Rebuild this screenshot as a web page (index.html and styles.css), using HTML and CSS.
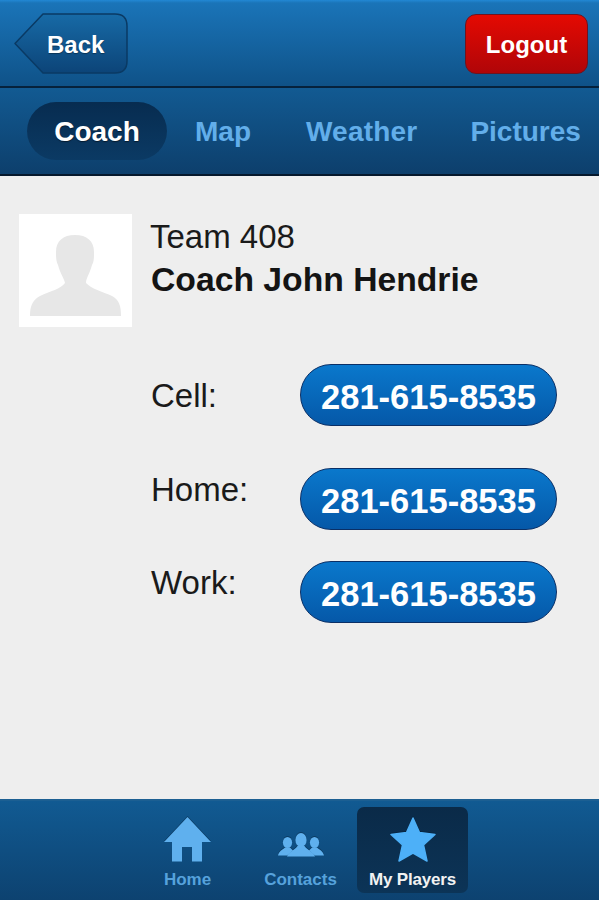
FILE: index.html
```html
<!DOCTYPE html>
<html lang="en">
<head>
<meta charset="utf-8">
<title>Coach</title>
<link rel="stylesheet" href="styles.css">
</head>
<body>
<div class="app">
  <header class="topbar">
    <a class="back">
      <svg class="back-shape" width="114" height="61" viewBox="0 0 114 61">
        <defs><linearGradient id="bk" x1="0" y1="0" x2="0" y2="1"><stop offset="0" stop-color="#176aa6"/><stop offset="1" stop-color="#0c4478"/></linearGradient></defs>
        <path d="M1 30.5 L29 1 H101 Q113 1 113 13 V48 Q113 60 101 60 H29 Z" fill="url(#bk)" stroke="#0a3a64" stroke-width="1.5" stroke-linejoin="round"/>
      </svg>
      <span class="back-label">Back</span>
    </a>
    <a class="logout">Logout</a>
  </header>
  <nav class="tabs">
    <a class="tab tab-active">Coach</a>
    <a class="tab tab-map">Map</a>
    <a class="tab tab-weather">Weather</a>
    <a class="tab">Pictures</a>
  </nav>
  <main class="content">
    <section class="profile">
      <div class="avatar">
        <svg width="92" height="81" viewBox="0 0 92 81">
          <path d="M45 0 C57 0 64 6 64 17 C64 23 64 27 62 30 C60 38 56 43 56 48 C61 54 74 57 82 61 C89 65 91 70 91 81 H0 C0 70 3 65 10 61 C20 56 31 54 35 48 C34 43 30 38 28 30 C26 26 26 22 26 17 C26 6 33 0 45 0 Z" fill="#e7e7e7"/>
        </svg>
      </div>
      <div class="identity">
        <div class="team">Team 408</div>
        <div class="coach-name">Coach John Hendrie</div>
      </div>
    </section>
    <section class="phones">
      <div class="phone-row phone-row-cell"><span class="phone-label">Cell:</span><a class="phone">281-615-8535</a></div>
      <div class="phone-row phone-row-home"><span class="phone-label">Home:</span><a class="phone">281-615-8535</a></div>
      <div class="phone-row phone-row-work"><span class="phone-label">Work:</span><a class="phone">281-615-8535</a></div>
    </section>
  </main>
  <footer class="tabbar">
    <a class="bar-item">
      <svg class="bar-icon" width="47" height="45" viewBox="0 0 47 45">
        <path d="M23.5 0 L47 25 H38 V44.5 H28 V30 H18 V44.5 H8 V25 H0 Z" fill="#5fb0ee"/>
      </svg>
      <span>Home</span>
    </a>
    <a class="bar-item">
      <svg class="bar-icon bar-icon-contacts" width="46" height="24" viewBox="0 0 46 24">
        <g fill="#5fb0ee">
          <ellipse cx="9.5" cy="9.5" rx="4.6" ry="5.6"/><path d="M0 22.5 C1 18 4 17 7 14.5 H12 L15 17.5 L9 22.5 Z"/>
          <ellipse cx="36.5" cy="9.5" rx="4.6" ry="5.6"/><path d="M46 22.5 C45 18 42 17 39 14.5 H34 L31 17.5 L37 22.5 Z"/>
          <ellipse cx="23" cy="7" rx="5.6" ry="7"/><path d="M9 23.5 C10 19 16 18 19.5 13 H26.5 C30 18 36 19 37 23.5 Z"/>
        </g>
      </svg>
      <span>Contacts</span>
    </a>
    <a class="bar-item bar-item-active">
      <svg class="bar-icon" width="46" height="45" viewBox="0 0 46 45">
        <path d="M23 1 L29.5 15.5 L45 17.5 L33.5 28 L37 44 L23 36 L9 44 L12.5 28 L1 17.5 L16.5 15.5 Z" fill="#4db0f8" stroke="#4db0f8" stroke-width="1.5" stroke-linejoin="round"/>
      </svg>
      <span>My Players</span>
    </a>
  </footer>
</div>
</body>
</html>
```

FILE: styles.css
```css
* { box-sizing: border-box; }
html, body { margin: 0; padding: 0; }
body { font-family: "Liberation Sans", Arial, sans-serif; background: #eeeeee; }
.app { width: 599px; height: 900px; display: flex; flex-direction: column; overflow: hidden; }

.topbar {
  height: 88px;
  flex: none;
  display: flex;
  justify-content: space-between;
  padding: 13px 11px 0 14px;
  background: linear-gradient(#2288d4 0, #1a74b8 3px, #0f5288 100%);
  border-bottom: 2px solid #06223c;
}
.back { position: relative; display: block; width: 114px; height: 61px; }
.back-shape { display: block; }
.back-label {
  position: absolute;
  left: 33px;
  top: 17px;
  font-size: 24px;
  line-height: 30px;
  font-weight: 700;
  color: #fff;
  text-shadow: 0 1px 1px rgba(0, 0, 0, 0.35);
}
.logout {
  width: 123px;
  height: 60px;
  margin-top: 1px;
  border-radius: 11px;
  border: 1px solid #6d1420;
  background: linear-gradient(#e40a02, #b00508);
  color: #fff;
  font-size: 24px;
  font-weight: 700;
  line-height: 60px;
  text-align: center;
}

.tabs {
  height: 88px;
  flex: none;
  display: flex;
  padding: 14px 0 0 27px;
  background: linear-gradient(#125a92, #0d3f6c);
  border-bottom: 2px solid #05182c;
  font-size: 28px;
  font-weight: 700;
  color: #62aeea;
}
.tab { line-height: 60px; height: 58px; white-space: nowrap; }
.tab-active {
  width: 140px;
  border-radius: 29px;
  background: linear-gradient(#072c50, #0b3a64);
  color: #fff;
  text-align: center;
  margin-right: 28px;
  text-shadow: 0 1px 1px rgba(0, 0, 0, 0.5);
}
.tab-map { margin-right: 55px; }
.tab-weather { margin-right: 53px; letter-spacing: 0.2px; }

.content { flex: 1; background: #eeeeee; padding: 38px 0 0 19px; }
.profile { display: flex; }
.avatar {
  width: 113px;
  height: 113px;
  background: #ffffff;
  padding: 21px 0 0 11px;
  flex: none;
}
.avatar svg { display: block; }
.identity { margin-left: 19px; }
.team { font-size: 33px; line-height: 44px; color: #1a1a1a; margin: 1px 0 -1px -1px; }
.coach-name { font-size: 33.7px; line-height: 42px; font-weight: 700; color: #141414; white-space: nowrap; }

.phones { margin: 37px 0 0 132px; }
.phone-row { display: flex; height: 62px; align-items: flex-start; }
.phone-row-home { margin-top: 42px; }
.phone-row-work { margin-top: 31px; }
.phone-label { width: 149px; font-size: 33px; line-height: 46px; color: #1a1a1a; flex: none; margin-top: 9px; }
.phone-row-home .phone-label { margin-top: -1px; }
.phone-row-work .phone-label { margin-top: -1px; }
.phone {
  width: 257px;
  height: 62px;
  border-radius: 31px;
  border: 1.5px solid #0a2f66;
  background: linear-gradient(#0a78cc, #0558a8);
  color: #fff;
  font-size: 34.5px;
  font-weight: 700;
  line-height: 64px;
  text-align: center;
  white-space: nowrap;
}

.tabbar {
  height: 101px;
  flex: none;
  display: flex;
  padding: 6px 0 0 131px;
  background: linear-gradient(#115a92, #0d4270);
  border-top: 2px solid #1c5f92;
}
.bar-item {
  width: 113px;
  height: 86px;
  padding-top: 10px;
  display: flex;
  flex-direction: column;
  align-items: center;
  font-size: 17px;
  font-weight: 700;
  color: #56a2dc;
  white-space: nowrap;
}
.bar-icon { display: block; flex: none; filter: drop-shadow(0 -1px 0 rgba(4, 30, 56, 0.45)); }
.bar-icon-contacts { margin: 16px 0 5px; }
.bar-item span { margin-top: 8px; line-height: 20px; }
.bar-item-active {
  width: 111px;
  background: linear-gradient(#0a2a48, #0c3457);
  border-radius: 7px;
  color: #f2f2f2;
  letter-spacing: -0.2px;
}
```
